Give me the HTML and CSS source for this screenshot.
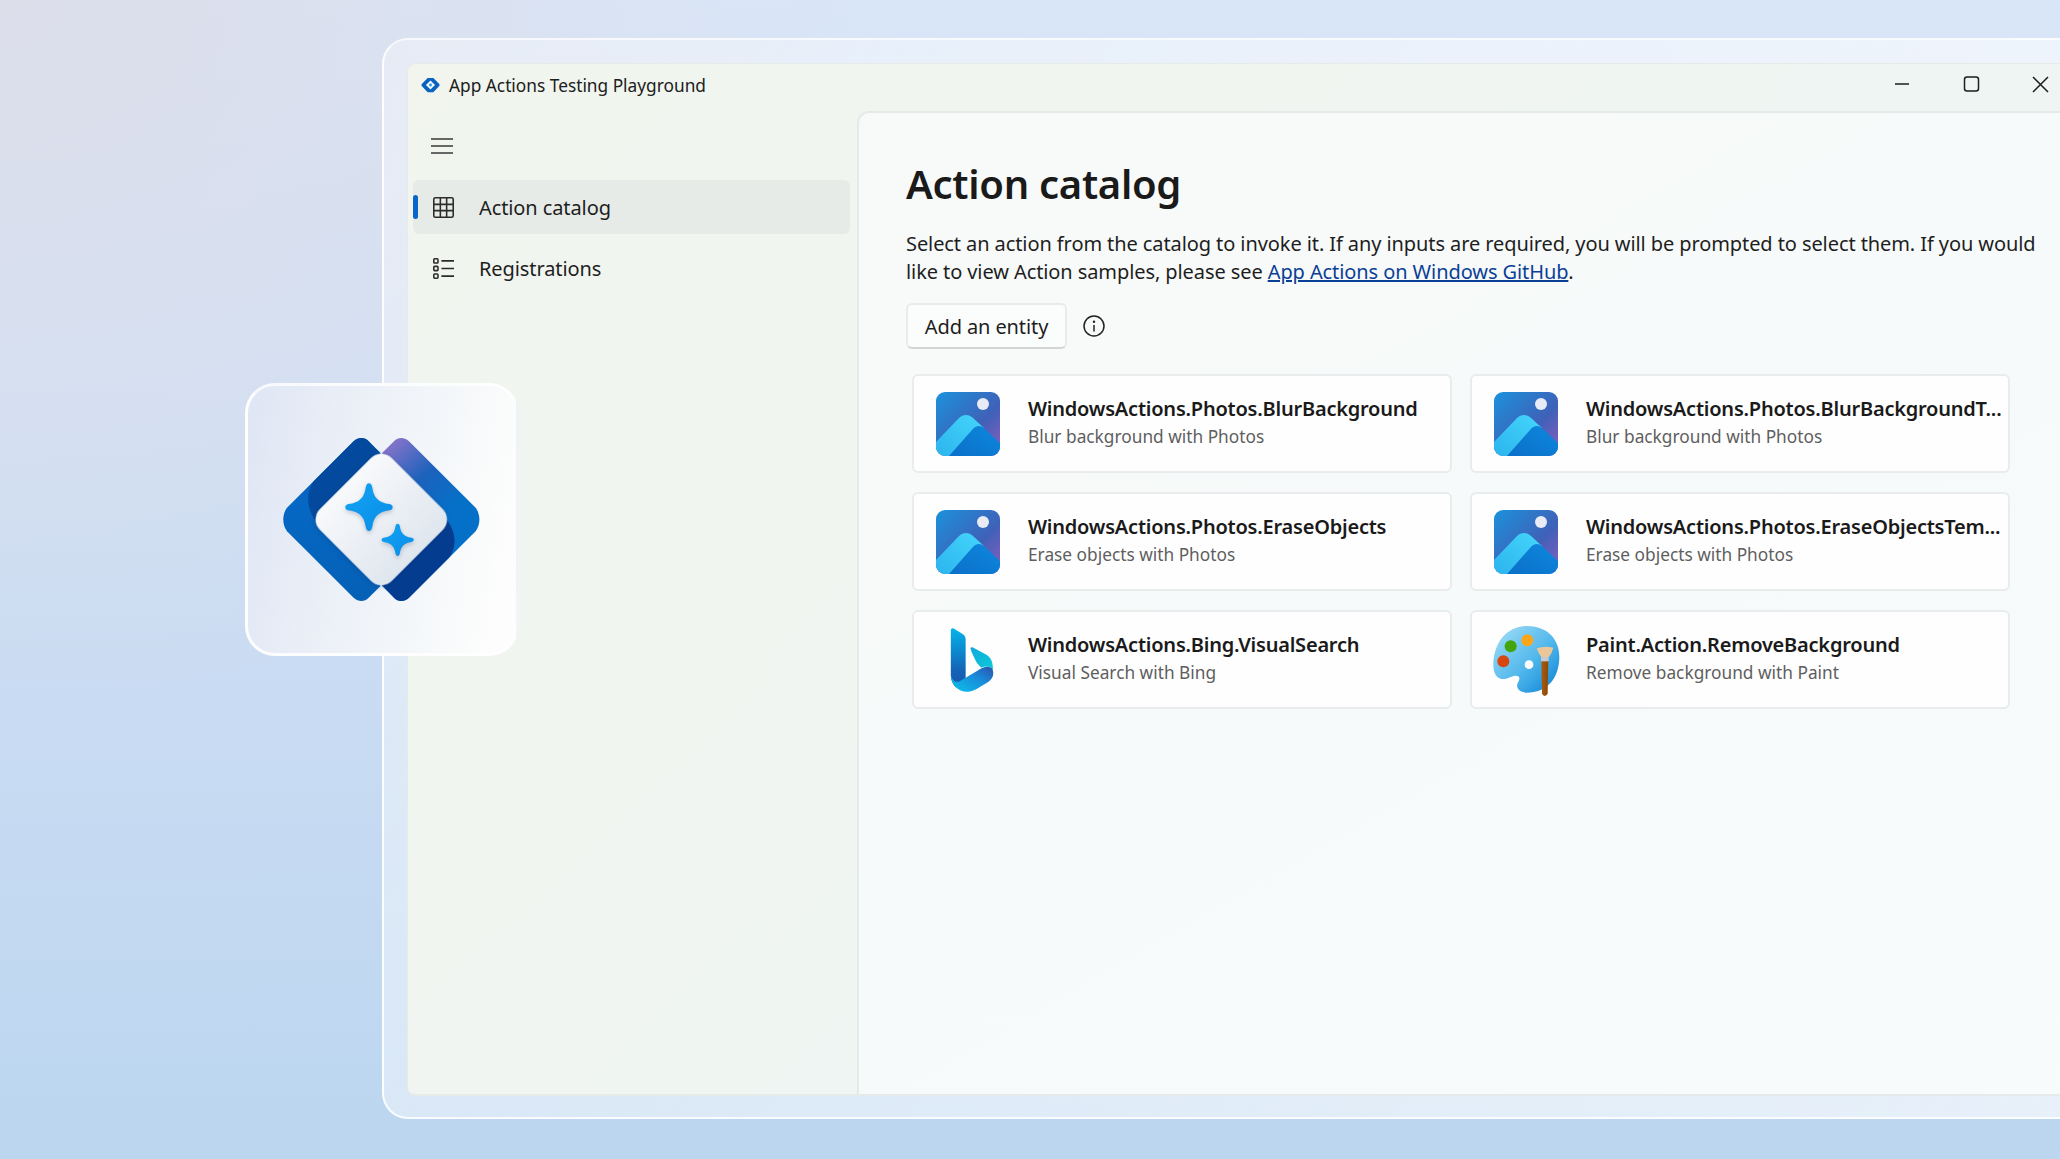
FILE: index.html
```html
<!DOCTYPE html>
<html lang="en">
<head>
<meta charset="utf-8">
<title>App Actions Testing Playground</title>
<link rel="stylesheet" href="styles.css">
</head>
<body>
<svg class="defs" width="0" height="0" aria-hidden="true">
  <defs>
    <linearGradient id="phSky" x1="0" y1="0" x2="1" y2="1"><stop offset="0" stop-color="#1b92dc"/><stop offset=".6" stop-color="#3f61b8"/><stop offset="1" stop-color="#8f5cc0"/></linearGradient>
    <linearGradient id="phLight" x1="1" y1="0" x2="0" y2="1"><stop offset="0" stop-color="#45d6fb"/><stop offset="1" stop-color="#2bb4ee"/></linearGradient>
    <linearGradient id="phDark" x1="0" y1="1" x2="1" y2="0"><stop offset="0" stop-color="#0b6fc8"/><stop offset="1" stop-color="#0d88de"/></linearGradient>
    <clipPath id="phClip"><rect width="64" height="64" rx="9"/></clipPath>
    <symbol id="photos" viewBox="0 0 64 64">
      <g clip-path="url(#phClip)">
        <rect width="64" height="64" fill="url(#phSky)"/>
        <circle cx="47" cy="12" r="6" fill="#e8ebf5"/>
        <path d="M0 50 L23 26 C27 22 33 22 37 26 L48 36 L30 64 L0 64Z" fill="url(#phLight)"/>
        <path d="M13 64 L36 38 C40 33 45 33 49 37 L64 51 L64 64Z" fill="url(#phDark)"/>
      </g>
    </symbol>
    <linearGradient id="lgLeft" x1="0" y1="0" x2="0" y2="1"><stop offset="0" stop-color="#0450a6"/><stop offset=".4" stop-color="#0568c4"/><stop offset="1" stop-color="#0560b6"/></linearGradient>
    <linearGradient id="lgRight" x1=".2" y1="0" x2=".5" y2=".55"><stop offset="0" stop-color="#7d72c8"/><stop offset=".5" stop-color="#1c62bc"/><stop offset="1" stop-color="#0570c8"/></linearGradient>
    <linearGradient id="lgCenter" x1="0" y1="0" x2="1" y2="0"><stop offset="0" stop-color="#f8f9fb"/><stop offset="1" stop-color="#dfe6ee"/></linearGradient>
    <linearGradient id="lgStar" x1="0" y1="0" x2="1" y2="1"><stop offset="0" stop-color="#12a4f4"/><stop offset="1" stop-color="#0a8ce6"/></linearGradient>
    <symbol id="star" viewBox="-105 -105 210 210" overflow="visible">
      <path d="M0 -100C8 -100 12 -92 14 -82C20 -40 40 -20 86 -13C104 -10 104 10 86 13C40 20 20 40 14 82C12 92 8 100 0 100C-8 100 -12 92 -14 82C-20 40 -40 20 -86 13C-104 10 -104 -10 -86 -13C-40 -20 -20 -40 -14 -82C-12 -92 -8 -100 0 -100Z"/>
    </symbol>
    <linearGradient id="bgStem" x1="0" y1="0" x2="0" y2="1"><stop offset="0" stop-color="#04b4ea"/><stop offset=".7" stop-color="#1464b8"/><stop offset="1" stop-color="#1a55ac"/></linearGradient>
    <linearGradient id="bgSweep" x1="0" y1="1" x2="1" y2="0"><stop offset="0" stop-color="#08c4ec"/><stop offset=".6" stop-color="#1a8ad8"/><stop offset="1" stop-color="#2a50ae"/></linearGradient>
    <linearGradient id="bgLeaf" x1="0" y1="0" x2="1" y2="1"><stop offset="0" stop-color="#10a8dc"/><stop offset="1" stop-color="#0ccbd8"/></linearGradient>
    <linearGradient id="ptBody" x1="0" y1="0" x2="1" y2="1"><stop offset="0" stop-color="#a6e0f6"/><stop offset=".55" stop-color="#52b8ec"/><stop offset="1" stop-color="#0780d4"/></linearGradient>
    <linearGradient id="ptBrush" x1="0" y1="0" x2="1" y2="0"><stop offset="0" stop-color="#a85c10"/><stop offset="1" stop-color="#8a4808"/></linearGradient>
  </defs>
</svg>

<aside class="logo-tile">
  <svg class="logo-big" viewBox="185 230 600 500">
    <path d="M400 245 L200 445 C185 465 185 495 200 515 L400 715 C415 728 432 728 445 715 L480 680 L480 280 L445 245 C432 232 415 232 400 245Z" fill="url(#lgLeft)"/>
    <path d="M566 245 L766 445 C781 465 781 495 766 515 L566 715 C551 728 534 728 521 715 L486 680 L486 280 L521 245 C534 232 551 232 566 245Z" fill="url(#lgRight)"/>
    <path d="M445 245 L480 283 L400 360 L290 490 C258 450 255 400 280 365 L400 245 C415 232 432 232 445 245Z" fill="#034a9e"/>
    <path d="M521 715 L486 677 L670 470 C708 510 712 560 686 595 L566 715 C551 728 534 728 521 715Z" fill="#043c90"/>
    <rect x="330.500" y="327.500" width="305" height="305" rx="45" transform="rotate(45 483 480)" fill="url(#lgCenter)" class="logo-core"/>
    <use href="#star" x="371" y="368" width="150" height="150" fill="url(#lgStar)" class="logo-star"/>
    <use href="#star" x="481" y="490" width="102" height="102" fill="url(#lgStar)" class="logo-star"/>
  </svg>
</aside>

<div class="frame">
  <div class="window">
    <header class="titlebar">
      <div class="app-title">
        <svg class="app-icon" viewBox="0 0 20 16">
          <path d="M7 .5 L.8 7 Q0 8 .8 9 L7 15.500 L10 15.500 L16 8 L10 .5Z" fill="#0a62c0"/>
          <path d="M13 .5 L19.200 7 Q20 8 19.200 9 L13 15.500 L10 15.500 L4 8 L10 .5Z" fill="#0a62c0"/>
          <path d="M10 3.200 L14.800 8 L10 12.800 L5.200 8Z" fill="#f3f6f8"/>
          <circle cx="10" cy="8" r="1.500" fill="#1a9cf0"/>
        </svg>
        <span>App Actions Testing Playground</span>
      </div>
      <div class="controls">
        <svg class="ctl" viewBox="0 0 20 20"><path d="M3 10H17"/></svg>
        <svg class="ctl" viewBox="0 0 20 20"><rect x="3.500" y="3" width="14" height="14" rx="2.500"/></svg>
        <svg class="ctl" viewBox="0 0 20 20"><path d="M3 3L18 18M18 3L3 18"/></svg>
      </div>
    </header>
    <div class="body-row">
      <nav class="sidebar">
        <div class="menu-row">
          <svg class="menu-icon" viewBox="0 0 22 16"><path d="M0 1H22M0 8H22M0 15H22"/></svg>
        </div>
        <a class="nav-item active">
          <svg class="nav-icon" viewBox="0 0 20 20"><rect x=".75" y=".75" width="18.500" height="18.500" rx="1.500"/><path d="M7 1V19M13 1V19M1 7H19M1 13H19"/></svg>
          <span>Action catalog</span>
        </a>
        <a class="nav-item">
          <svg class="nav-icon" viewBox="0 0 20 20"><rect x=".75" y=".75" width="4" height="4" rx=".8"/><rect x=".75" y="8" width="4" height="4" rx=".8"/><rect x=".75" y="15.250" width="4" height="4" rx=".8"/><path d="M8 2.750H20M8 10H20M8 17.250H20"/></svg>
          <span>Registrations</span>
        </a>
      </nav>
      <main class="content">
        <h1>Action catalog</h1>
        <p class="intro">Select an action from the catalog to invoke it. If any inputs are required, you will be prompted to select them. If you would like to view Action samples, please see <a class="link">App Actions on Windows GitHub</a>.</p>
        <div class="toolbar">
          <button class="btn">Add an entity</button>
          <svg class="info" viewBox="0 0 22 22"><circle cx="11" cy="11" r="10"/><path d="M11 10V16.500"/><circle class="dot" cx="11" cy="6.800" r="1.200"/></svg>
        </div>
        <section class="cards">
          <article class="card">
            <svg class="card-icon"><use href="#photos"/></svg>
            <div class="card-text"><h2>WindowsActions.Photos.BlurBackground</h2><p>Blur background with Photos</p></div>
          </article>
          <article class="card">
            <svg class="card-icon"><use href="#photos"/></svg>
            <div class="card-text"><h2>WindowsActions.Photos.BlurBackgroundT...</h2><p>Blur background with Photos</p></div>
          </article>
          <article class="card">
            <svg class="card-icon"><use href="#photos"/></svg>
            <div class="card-text"><h2>WindowsActions.Photos.EraseObjects</h2><p>Erase objects with Photos</p></div>
          </article>
          <article class="card">
            <svg class="card-icon"><use href="#photos"/></svg>
            <div class="card-text"><h2>WindowsActions.Photos.EraseObjectsTem...</h2><p>Erase objects with Photos</p></div>
          </article>
          <article class="card">
            <svg class="card-icon" viewBox="97 85 190 190">
              <path d="M155 92C155 86 161 84 166 88L190 103C197 108 199 113 199 120V240L170 262C160 250 155 240 155 225Z" fill="url(#bgStem)" transform="translate(-14 0)"/>
              <path d="M214 148C212 143 216 141 221 143L262 165C275 173 281 190 280 210C272 197 258 197 245 203L232 188C225 175 218 160 214 148Z" fill="url(#bgLeaf)" transform="translate(-14 0)"/>
              <path d="M155 222C155 255 180 277 208 274C222 272 232 266 245 258L265 246C280 236 284 222 279 208C274 197 258 198 245 205L199 233L180 244C168 248 157 238 155 222Z" fill="url(#bgSweep)" transform="translate(-14 0)"/>
            </svg>
            <div class="card-text"><h2>WindowsActions.Bing.VisualSearch</h2><p>Visual Search with Bing</p></div>
          </article>
          <article class="card">
            <svg class="card-icon card-icon-over" viewBox="102 84 192 192">
              <path d="M200 78C260 78 298 115 298 170C298 235 260 278 200 278C175 278 165 260 175 245C185 228 170 222 150 232C125 245 100 235 100 195C100 130 140 78 200 78Z" fill="url(#ptBody)"/>
              <circle cx="207" cy="194" r="13" fill="#fff"/>
              <circle cx="152" cy="139" r="18" fill="#43a50e"/>
              <circle cx="202" cy="121" r="18" fill="#fba51a"/>
              <circle cx="130" cy="184" r="18" fill="#d6460e"/>
              <path d="M244 182H265L263 280Q261 288 254 288Q247 288 246 280Z" fill="url(#ptBrush)"/>
              <rect x="243" y="170" width="23" height="14" fill="#c7c9cc"/>
              <path d="M230 145Q254 136 280 143Q276 158 267 171H244Q234 158 230 145Z" fill="#e9c79a"/>
            </svg>
            <div class="card-text"><h2>Paint.Action.RemoveBackground</h2><p>Remove background with Paint</p></div>
          </article>
        </section>
      </main>
    </div>
  </div>
</div>
</body>
</html>
```
FILE: styles.css
```css
* { box-sizing: border-box; }
html, body { margin: 0; height: 100%; }
body {
  width: 2060px;
  height: 1159px;
  overflow: hidden;
  position: relative;
  font-family: "Noto Sans", "Open Sans", sans-serif;
  color: #1b1b1b;
  padding: 38px 0 0 382px;
  background:
    radial-gradient(900px 700px at 0 0, #dcdeea 0%, rgba(220,222,236,0) 100%),
    linear-gradient(180deg, #d9e6f8 0%, #ccddf3 50%, #bcd6f0 100%);
}
.defs { position: absolute; }
.frame {
  width: 1700px;
  height: 1081px;
  border: 2px solid rgba(255,255,255,.85);
  border-radius: 26px 0 0 26px;
  padding: 23px 0 0 23px;
  background: linear-gradient(120deg, rgba(255,255,255,.35) 0%, rgba(255,255,255,.5) 50%, rgba(255,255,255,.65) 100%);
}
.frame { border-top-color: rgba(255,255,255,.6); }
.window {
  width: 1653px;
  height: 1033px;
  display: flex;
  flex-direction: column;
  border-radius: 8px 0 0 8px;
  border: solid #e6eae8;
  border-width: 1px 0 2px 1px;
  background: linear-gradient(135deg, #f1f5ee 0%, #f0f5f1 40%, #eef5f7 100%);
  overflow: hidden;
}
.titlebar {
  height: 47px;
  flex: none;
  display: flex;
  align-items: center;
  justify-content: space-between;
  padding: 0 10px 0 13px;
}
.app-title {
  display: flex;
  align-items: center;
  gap: 9px;
  font-size: 17.300px;
  color: #202020;
  padding-bottom: 5px;
}
.app-icon { width: 19px; height: 16px; flex: none; margin-top: -1px; }
.controls { display: flex; gap: 49px; margin-top: -8px; }
.ctl { width: 20px; height: 20px; fill: none; stroke: #1d1d1d; stroke-width: 1.500; }
.body-row { flex: 1; display: flex; min-height: 0; }
.sidebar {
  width: 449px;
  flex: none;
  padding: 0 7px 0 5px;
  display: flex;
  flex-direction: column;
  gap: 7px;
}
.menu-row { height: 62px; padding: 27px 0 0 18px; flex: none; }
.menu-icon { display: block; width: 22px; height: 16px; fill: none; stroke: #3a3a3a; stroke-width: 1.500; }
.nav-item {
  position: relative;
  height: 54px;
  display: flex;
  align-items: center;
  gap: 25px;
  padding: 0 0 0 20px;
  border-radius: 6px;
  font-size: 20px;
  letter-spacing: -.1px;
  color: #1e1e1e;
}
.nav-item.active { background: #e7ebe7; }
.nav-item.active::before {
  content: "";
  position: absolute;
  left: 0;
  top: 15px;
  width: 5px;
  height: 24px;
  border-radius: 3px;
  background: #0a66c8;
}
.nav-icon { width: 21px; height: 21px; flex: none; fill: none; stroke: #2c2c2c; stroke-width: 1.500; }
.content {
  flex: 1;
  border: solid #e3eae8;
  border-width: 2px 0 0 2px;
  border-radius: 12px 0 0 0;
  padding: 45px 0 0 47px;
  background: linear-gradient(150deg, #f8faf9 0%, #f7fafa 50%, #f7fbfc 100%);
}
h1 {
  margin: 0;
  font-size: 40px;
  line-height: 52px;
  font-weight: 600;
  color: #1a1a1a;
  letter-spacing: -.3px;
}
.intro {
  margin: 20px 0 0;
  width: 1136px;
  font-size: 20px;
  letter-spacing: -.09px;
  line-height: 28px;
  color: #1e1e1e;
}
.link { color: #0a3f96; text-decoration: underline; }
.toolbar { display: flex; align-items: center; gap: 16px; margin: 17px 0 0; }
.btn {
  width: 161px;
  height: 46px;
  font: inherit;
  font-size: 20px;
  letter-spacing: -.1px;
  color: #1e1e1e;
  background: #fbfcfc;
  border: 2px solid #e8ebeb;
  border-bottom-color: #d2d5d5;
  border-radius: 6px;
  padding: 0;
}
.info { width: 22px; height: 22px; fill: none; stroke: #222; stroke-width: 1.500; }
.info .dot { fill: #222; stroke: none; }
.cards {
  display: grid;
  grid-template-columns: 540px 540px;
  grid-auto-rows: 99px;
  column-gap: 18px;
  row-gap: 19px;
  margin: 25px 0 0 6px;
}
.card {
  display: flex;
  align-items: center;
  gap: 28px;
  padding: 0 8px 0 22px;
  background: rgba(255,255,255,.8);
  border: 2px solid #e9ecec;
  border-radius: 6px;
  min-width: 0;
}
.card-icon { width: 64px; height: 64px; flex: none; }
.card-icon-over { overflow: visible; }
.card-text { min-width: 0; margin-top: -2px; }
h2 {
  margin: 0;
  font-size: 20px;
  letter-spacing: -.22px;
  line-height: 28px;
  font-weight: 600;
  color: #1a1a1a;
  white-space: nowrap;
}
.card p {
  margin: 0;
  font-size: 17.300px;
  line-height: 28px;
  color: #5e5e5e;
  white-space: nowrap;
}
.logo-tile {
  position: absolute;
  left: 245px;
  top: 383px;
  width: 274px;
  height: 273px;
  display: flex;
  align-items: center;
  justify-content: center;
  border: 3px solid rgba(255,255,255,.9);
  border-top-color: rgba(255,255,255,.7);
  border-right-color: rgba(255,255,255,.5);
  border-radius: 30px;
  background: linear-gradient(100deg, #dfe6f4 0%, #eef2f8 45%, #fcfdfc 90%);
}
.logo-big { width: 200px; height: 167px; overflow: visible; }
.logo-core { filter: drop-shadow(0 4px 10px rgba(10,40,90,.25)); }
.logo-star { filter: drop-shadow(0 6px 6px rgba(40,60,90,.25)); }
```
